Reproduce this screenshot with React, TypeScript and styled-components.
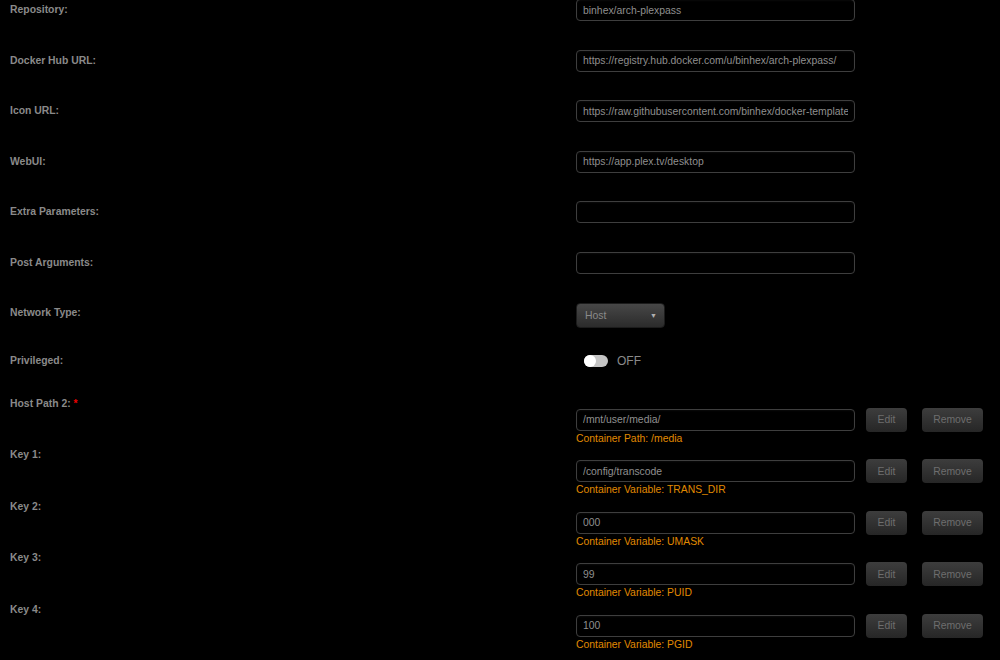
import React from "react";
import styled, { createGlobalStyle } from "styled-components";

const GlobalStyle = createGlobalStyle`
  html, body {
    margin: 0;
    padding: 0;
    background: #000;
  }
  body {
    font-family: "Liberation Sans", Arial, sans-serif;
    font-size: 10.4px;
    color: #8c8c8c;
  }
`;

const simpleRows = [
  { label: "Repository:", value: "binhex/arch-plexpass" },
  { label: "Docker Hub URL:", value: "https://registry.hub.docker.com/u/binhex/arch-plexpass/" },
  { label: "Icon URL:", value: "https://raw.githubusercontent.com/binhex/docker-templates/master/binhex/images/plexpass-icon.png" },
  { label: "WebUI:", value: "https://app.plex.tv/desktop" },
  { label: "Extra Parameters:", value: "" },
  { label: "Post Arguments:", value: "" },
];

const pathRows = [
  { label: "Host Path 2:", required: true, value: "/mnt/user/media/", hint: "Container Path: /media" },
  { label: "Key 1:", value: "/config/transcode", hint: "Container Variable: TRANS_DIR" },
  { label: "Key 2:", value: "000", hint: "Container Variable: UMASK" },
  { label: "Key 3:", value: "99", hint: "Container Variable: PUID" },
  { label: "Key 4:", value: "100", hint: "Container Variable: PGID" },
];

const App = () => (
  <>
    <GlobalStyle />
    <Form>
      {simpleRows.map((r) => (
        <Row key={r.label} $height={50.6}>
          <Label>{r.label}</Label>
          <TextInput readOnly value={r.value} />
        </Row>
      ))}
      <Row $height={47}>
        <Label $top={3}>Network Type:</Label>
        <Select>
          Host
          <Caret>▼</Caret>
        </Select>
      </Row>
      <Row $height={48}>
        <Label $top={4}>Privileged:</Label>
        <ToggleWrap>
          <Toggle>
            <Knob />
          </Toggle>
          <ToggleText>OFF</ToggleText>
        </ToggleWrap>
      </Row>
      {pathRows.map((r) => (
        <Row key={r.label} $height={51.5}>
          <Label $top={-1}>
            {r.label}
            {r.required && <Required> *</Required>}
          </Label>
          <PathField>
            <PathLine>
              <TextInput readOnly value={r.value} />
              <Button>Edit</Button>
              <Button $wide>Remove</Button>
            </PathLine>
            <Hint>{r.hint}</Hint>
          </PathField>
        </Row>
      ))}
    </Form>
  </>
);

export default App;

const Form = styled.div`
  padding-left: 10px;
  margin-top: -1px;
  width: 990px;
`;

const Row = styled.div<{ $height: number }>`
  display: flex;
  align-items: flex-start;
  height: ${(p) => p.$height}px;
`;

const Label = styled.div<{ $top?: number }>`
  width: 566px;
  flex-shrink: 0;
  font-weight: bold;
  color: #8a8a8a;
  line-height: 13px;
  margin-top: ${(p) => (p.$top !== undefined ? p.$top : 4)}px;
`;

const Required = styled.span`
  color: #e00;
`;

const TextInput = styled.input`
  box-sizing: border-box;
  width: 279px;
  height: 22px;
  margin: 0;
  padding: 0 6px;
  background: #000;
  border: 1px solid #3e3e3e;
  border-radius: 4px;
  box-shadow: inset 0 1px 2px rgba(255, 255, 255, 0.04);
  color: #8f8f8f;
  font-family: "Liberation Sans", Arial, sans-serif;
  font-size: 10.4px;
  outline: none;
`;

const Select = styled.div`
  box-sizing: border-box;
  width: 89px;
  height: 25px;
  display: flex;
  align-items: center;
  justify-content: space-between;
  padding: 0 7px 0 8px;
  border-radius: 4px;
  border: 1px solid #1c1c1c;
  background: linear-gradient(to bottom, #474747, #2b2b2b);
  color: #8a8a8a;
  font-size: 10.4px;
`;

const Caret = styled.span`
  font-size: 7px;
  color: #b0b0b0;
`;

const ToggleWrap = styled.div`
  display: flex;
  align-items: center;
  gap: 9px;
  padding-left: 8px;
  padding-top: 4px;
`;

const Toggle = styled.div`
  width: 24px;
  height: 12px;
  border-radius: 6px;
  background: #c4c4c4;
  display: flex;
  align-items: center;
`;

const Knob = styled.div`
  width: 12px;
  height: 12px;
  border-radius: 6px;
  background: #fff;
`;

const ToggleText = styled.span`
  font-size: 12px;
  color: #8a8a8a;
`;

const PathField = styled.div`
  display: flex;
  flex-direction: column;
  padding-top: 10px;
`;

const PathLine = styled.div`
  display: flex;
  align-items: center;
`;

const Button = styled.div<{ $wide?: boolean }>`
  box-sizing: border-box;
  height: 24px;
  width: ${(p) => (p.$wide ? 61 : 41)}px;
  margin-left: ${(p) => (p.$wide ? 15 : 11)}px;
  display: flex;
  align-items: center;
  justify-content: center;
  border-radius: 4px;
  background: linear-gradient(to bottom, #3d3d3d, #262626);
  color: #6e6e6e;
  font-size: 10.4px;
`;

const Hint = styled.div`
  color: #e08a00;
  line-height: 13px;
`;
